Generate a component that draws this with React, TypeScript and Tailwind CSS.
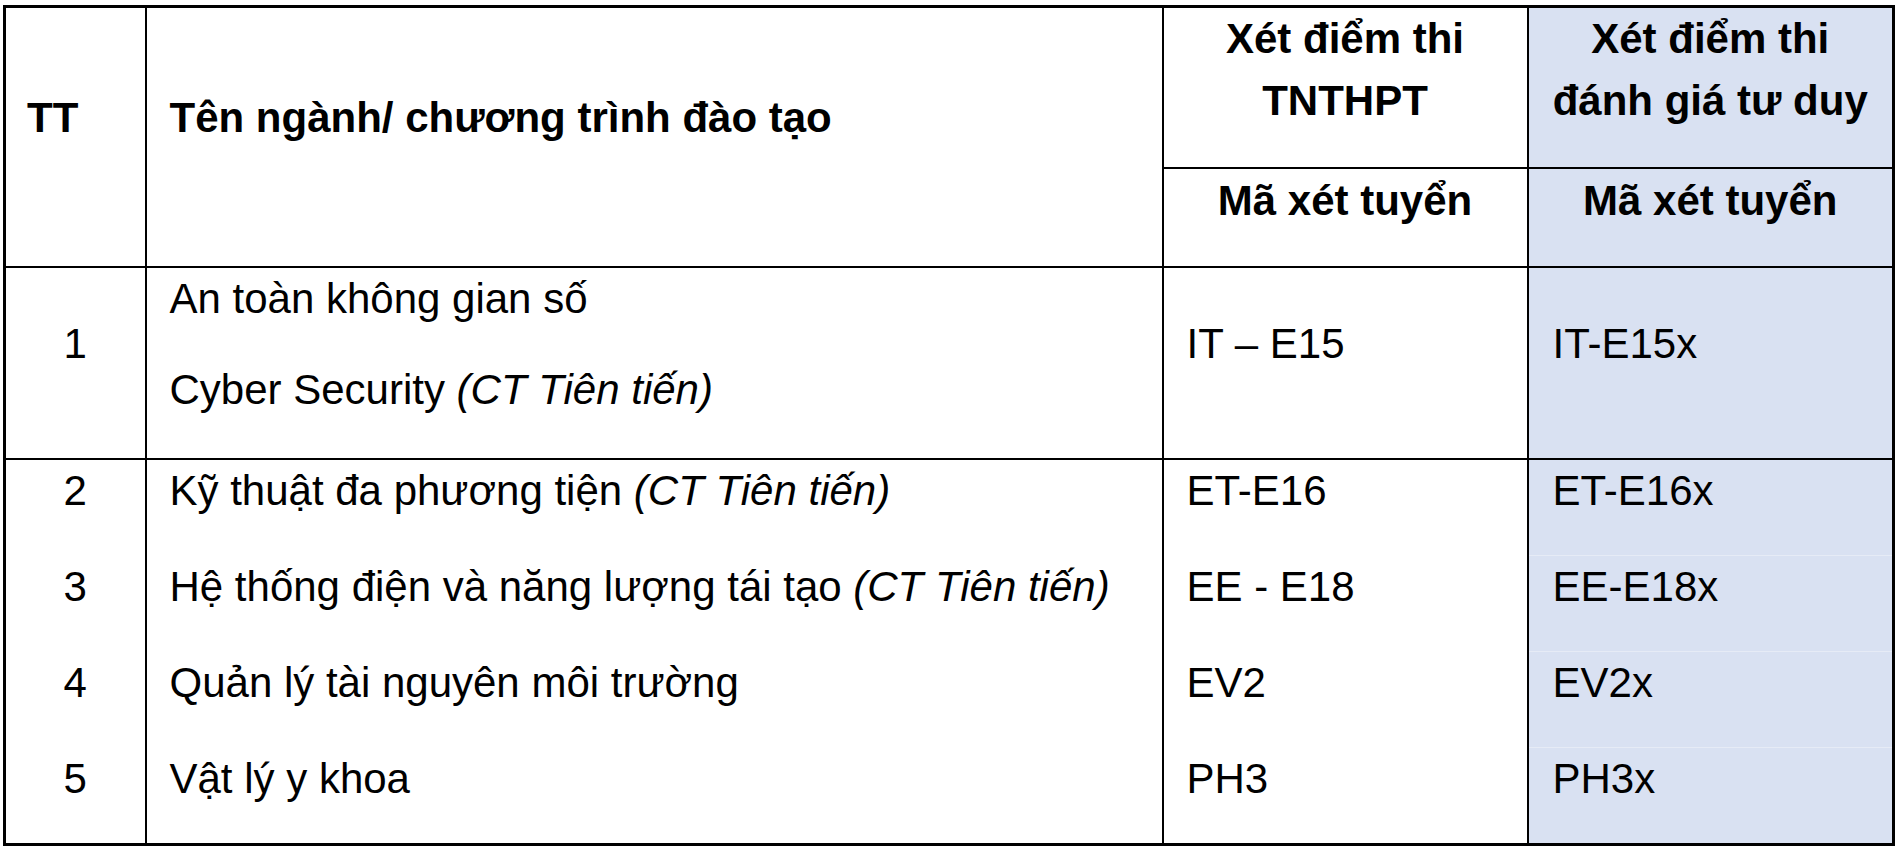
import React from 'react'

// Admission codes table: 4 columns, header split in two rows, shaded last column.

interface Row {
  tt: string
  name: string
  advanced?: boolean
  code: string
  codeX: string
}

const ROWS: Row[] = [
  { tt: '2', name: 'Kỹ thuật đa phương tiện', advanced: true, code: 'ET-E16', codeX: 'ET-E16x' },
  { tt: '3', name: 'Hệ thống điện và năng lượng tái tạo', advanced: true, code: 'EE - E18', codeX: 'EE-E18x' },
  { tt: '4', name: 'Quản lý tài nguyên môi trường', code: 'EV2', codeX: 'EV2x' },
  { tt: '5', name: 'Vật lý y khoa', code: 'PH3', codeX: 'PH3x' },
]

// one Word-style paragraph: line + spacing after
function P({ children, className = 'mb-[33px]' }: { children: React.ReactNode; className?: string }) {
  return <p className={`leading-[62px] whitespace-nowrap ${className}`}>{children}</p>
}

const Advanced = () => <span className="italic">(CT Tiên tiến)</span>

export default function App() {
  return (
    <div className="min-h-screen bg-white text-black font-['Liberation_Sans',Arial,sans-serif] text-[42px]">
      <table className="table-fixed border-collapse ml-[3px] mt-[5px] w-[1892px] border-[3px] border-black">
        <colgroup>
          <col className="w-[141px]" />
          <col className="w-[1017px]" />
          <col className="w-[365px]" />
          <col className="w-[366px]" />
        </colgroup>
        <thead>
          <tr>
            <th rowSpan={2} className="border-2 border-black align-middle text-left font-bold pl-[21px] pr-0 pt-0 pb-[5px]">
              <P>TT</P>
            </th>
            <th rowSpan={2} className="border-2 border-black align-middle text-left font-bold pl-[23px] pr-0 pt-0 pb-[5px]">
              <P>Tên ngành/ chương trình đào tạo</P>
            </th>
            <th className="border-2 border-black align-middle text-center font-bold px-0 pt-0 pb-[2px]">
              <p className="leading-[62px] whitespace-nowrap">Xét điểm thi</p>
              <P>TNTHPT</P>
            </th>
            <th className="border-2 border-black align-middle text-center font-bold px-0 pt-0 pb-[2px] bg-[#d9e1f2]">
              <p className="leading-[62px] whitespace-nowrap">Xét điểm thi</p>
              <P>đánh giá tư duy</P>
            </th>
          </tr>
          <tr>
            <th className="border-2 border-black align-middle text-center font-bold px-0 py-[1px]">
              <P>Mã xét tuyển</P>
            </th>
            <th className="border-2 border-black align-middle text-center font-bold px-0 py-[1px] bg-[#d9e1f2]">
              <P>Mã xét tuyển</P>
            </th>
          </tr>
        </thead>
        <tbody>
          <tr>
            <td className="border-2 border-black align-middle text-center font-normal pt-0 pb-[5px] px-0">
              <P>1</P>
            </td>
            <td className="border-2 border-black align-middle pl-[23px] pr-0 pt-0 pb-[4px]">
              <P className="mb-[29px]">An toàn không gian số</P>
              <P>
                Cyber Security <Advanced />
              </P>
            </td>
            <td className="border-2 border-black align-middle pl-[23px] pr-0 pt-0 pb-[5px]">
              <P>IT – E15</P>
            </td>
            <td className="border-2 border-black align-middle pl-[24px] pr-0 pt-0 pb-[5px] bg-[#d9e1f2]">
              <P>IT-E15x</P>
            </td>
          </tr>
          {ROWS.map((r, i) => {
            const last = i === ROWS.length - 1
            return (
              <tr key={r.tt}>
                <td className={`border-x-2 border-black align-middle text-center p-0 ${last ? 'border-b-[3px]' : ''}`}>
                  <P>{r.tt}</P>
                </td>
                <td className={`border-x-2 border-black align-middle pl-[23px] pr-0 py-0 ${last ? 'border-b-[3px]' : ''}`}>
                  <P>
                    {r.name}
                    {r.advanced && (
                      <>
                        {' '}
                        <Advanced />
                      </>
                    )}
                  </P>
                </td>
                <td className={`border-x-2 border-black align-middle pl-[23px] pr-0 py-0 ${last ? 'border-b-[3px]' : ''}`}>
                  <P>{r.code}</P>
                </td>
                <td
                  className={`border-l-2 border-black align-middle pl-[24px] pr-0 py-0 bg-[#d9e1f2] ${
                    last ? 'border-b-[3px]' : 'border-b border-b-[#e6ebf6]'
                  }`}
                >
                  <P>{r.codeX}</P>
                </td>
              </tr>
            )
          })}
        </tbody>
      </table>
    </div>
  )
}
